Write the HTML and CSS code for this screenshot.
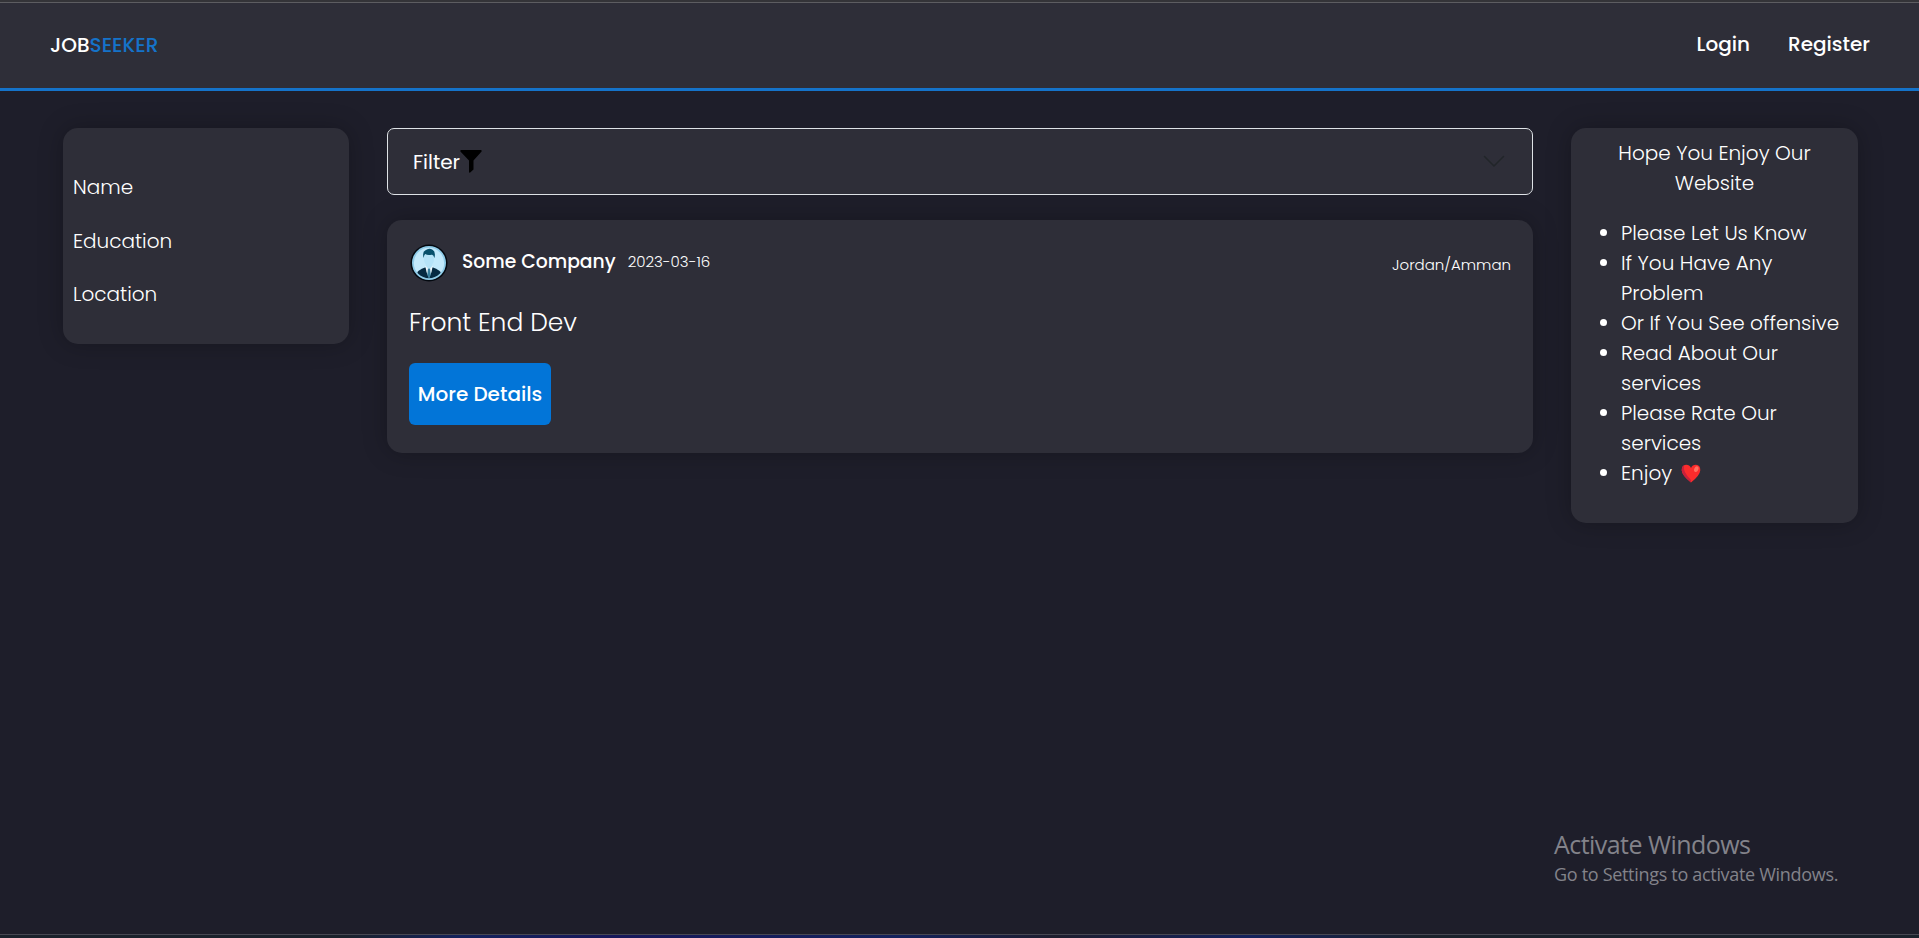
FILE: index.html
```
<!DOCTYPE html>
<html lang="en">
<head>
<meta charset="utf-8">
<title>JobSeeker</title>
<link rel="stylesheet" href="styles.css">
</head>
<body>
<header class="navbar">
  <div class="brand"><span class="brand-job">JOB</span><span class="brand-seeker">SEEKER</span></div>
  <nav class="links"><a>Login</a><a>Register</a></nav>
</header>
<main class="layout">
  <aside class="card profile">
    <div>Name</div>
    <div>Education</div>
    <div>Location</div>
  </aside>
  <section class="feed">
    <div class="filter">
      <span class="filter-label">Filter</span>
      <svg class="funnel" viewBox="0 0 22 23" width="22" height="23"><path d="M1 0H21Q22 .2 21.6 1.6L13.5 10.5V19.5L10.2 22.6Q9 23 9 21.8V10.5L.4 1.6Q0 .2 1 0Z" fill="#000"/></svg>
      <svg class="chevron" viewBox="0 0 22 13" width="22" height="13"><path d="M1.5 1.5L11 11L20.5 1.5" fill="none" stroke="#212529" stroke-width="1.5" stroke-linecap="round" stroke-linejoin="round"/></svg>
    </div>
    <article class="card job">
      <div class="job-head">
        <svg class="avatar" viewBox="0 0 38 38" width="38" height="38">
          <defs><clipPath id="disc"><circle cx="19" cy="19" r="15.2"/></clipPath></defs>
          <circle cx="19" cy="19" r="18.5" fill="#03080f"/>
          <circle cx="19" cy="19" r="17" fill="#8ecbe8"/>
          <circle cx="19" cy="19" r="15.2" fill="#c2e9fb"/>
          <g clip-path="url(#disc)">
            <path d="M7 38V29Q8 26 15 23.5H23Q30 26 31 29V38Z" fill="#062a42"/>
            <path d="M15.3 22H22.7L21.5 28L19 34L16.5 28Z" fill="#f2fbff"/>
            <path d="M18 23.5H20L20.7 31L19 34.5L17.3 31Z" fill="#367e9d"/>
          </g>
          <path d="M14 11Q13.3 18 16.2 21V23L19 25L21.8 23V21Q24.7 18 24 11L19 9Z" fill="#b5e3f8"/>
          <path d="M13.6 14Q12 7.500 15.500 6.300Q19 3.500 22.500 5.800Q26 7.500 24.400 14Q23.500 10.500 21.500 10.800Q17 11.500 15.500 10Q14 10.500 13.600 14Z" fill="#07506b"/>
        </svg>
        <span class="company">Some Company</span>
        <span class="date">2023-03-16</span>
        <span class="place">Jordan/Amman</span>
      </div>
      <div class="title">Front End Dev</div>
      <a class="details">More Details</a>
    </article>
  </section>
  <aside class="card notes">
    <div class="notes-title">Hope You Enjoy Our Website</div>
    <ul class="notes-list">
      <li>Please Let Us Know</li>
      <li>If You Have Any Problem</li>
      <li class="wide">Or If You See offensive</li>
      <li>Read About Our services</li>
      <li>Please Rate Our services</li>
      <li>Enjoy <svg class="heart" viewBox="0 0 20 19" width="20" height="19"><path d="M10 18.500Q1 11.500 .7 6.300Q.6 1.200 5 .8Q8.500 .7 10 4Q11.500 .7 15 .8Q19.400 1.200 19.300 6.300Q19 11.500 10 18.500Z" fill="#fb2c2c"/><path d="M10 18.500Q1 11.500 .7 6.300Q.8 2.500 3 1.300Q1.500 8 10 16Z" fill="#c8203c"/><ellipse cx="15.300" cy="5.200" rx="2" ry="3" transform="rotate(25 15.300 5.200)" fill="#ff7060"/></svg></li>
    </ul>
  </aside>
</main>
<div class="watermark">
  <div class="wm-title">Activate Windows</div>
  <div class="wm-text">Go to Settings to activate Windows.</div>
</div>
<div class="taskbar"></div>
</body>
</html>
```
FILE: styles.css
```
* { box-sizing: border-box; }
body {
  margin: 0;
  height: 938px;
  overflow: hidden;
  display: flex;
  flex-direction: column;
  background: #1e1e2a;
  color: #fff;
  font-family: Poppins, Inter, sans-serif;
  font-size: 20px;
  font-weight: 300;
  line-height: 30px;
}
.navbar {
  flex: none;
  height: 91px;
  display: flex;
  justify-content: space-between;
  padding: 29px 49px 0 50px;
  border-bottom: 3px solid #1573c9;
  background: linear-gradient(#343438 0 2px, #5d5d61 2px 3px, #2e2e38 3px);
  font-weight: 500;
}
.brand { padding-top: 1px; }
.brand-seeker { color: #1573c9; }
.links { display: flex; gap: 38px; }

.layout {
  flex: 1;
  display: grid;
  grid-template-columns: 286px 1146px 287px;
  gap: 38px;
  align-items: start;
  padding: 37px 0 0 63px;
}
.card {
  background: #2e2e38;
  border-radius: 15px;
  box-shadow: 0 0 25px rgba(0, 0, 0, .25);
}
.profile {
  height: 216px;
  padding: 44px 10px 0;
  display: flex;
  flex-direction: column;
  gap: 23.500px;
}

.feed { display: flex; flex-direction: column; gap: 25px; }
.filter {
  height: 67px;
  display: flex;
  align-items: center;
  border: 1px solid #dee2e6;
  border-radius: 7px;
  background: #2e2e38;
  padding: 0 27px 0 25px;
}
.filter-label { font-weight: 400; padding-top: 1px; }
.chevron { margin-left: auto; }

.job {
  height: 233px;
  padding: 23px 22px 0;
}
.job-head { display: flex; align-items: flex-start; height: 61px; }
.avatar { margin: 1px 14px 0 1px; }
.company { font-size: 18.75px; font-weight: 500; margin-top: 4px; }
.date { font-size: 15px; margin: 4px 0 0 12px; }
.place { font-size: 15px; margin: 7px 0 0 auto; }
.title { font-size: 25px; line-height: 38px; }
.details {
  display: flex;
  align-items: center;
  justify-content: center;
  width: 142px;
  height: 62px;
  margin-top: 21px;
  border-radius: 6px;
  background: #0275d8;
  font-weight: 500;
}

.notes { height: 395px; padding: 10px 15px 0; }
.notes-title { text-align: center; }
.notes-list { margin: 20px -5px 0 0; padding-left: 35px; }
.notes-list li { padding-right: 13px; }
.notes-list .wide { padding-right: 0; white-space: nowrap; }
.heart { vertical-align: -3px; margin-left: 3px; }

.watermark {
  position: absolute;
  left: 1554px;
  top: 826px;
  color: #83838a;
  font-family: "Segoe UI", "Open Sans", sans-serif;
  font-weight: 400;
}
.wm-title { font-size: 25px; line-height: 36px; letter-spacing: -.55px; }
.wm-text { font-size: 18px; line-height: 24px; letter-spacing: -.31px; }
.taskbar {
  flex: none;
  height: 4px;
  border-top: 1px solid #484852;
  background: linear-gradient(90deg, #1b222c 0 18%, #14225c 24%, #17185a 32%, #14225c 47%, #1e1e2e 55%, #14225c 65%, #1b222c 74%);
}
```
